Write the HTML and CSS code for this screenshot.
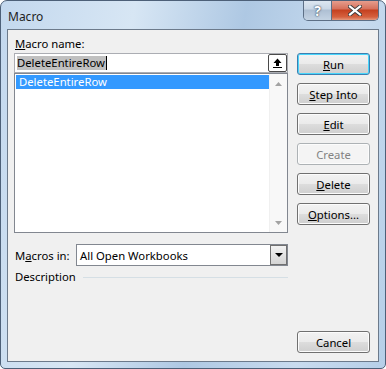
FILE: index.html
```html
<!DOCTYPE html>
<html lang="en">
<head>
    <meta charset="UTF-8">
    <title>Macro</title>
    <link rel="stylesheet" href="styles.css">
</head>
<body>
    <div class="window">
        <!-- Title bar -->
        <div class="title-bar">
            <span class="title">Macro</span>
            <div class="caption-buttons">
                <div class="cap-btn help">?</div>
                <div class="cap-btn close">
                    <svg width="14" height="11" viewBox="0 0 14 11">
                        <path d="M2 1.5 L12 9.5 M12 1.5 L2 9.5" stroke="#3d3d3d" stroke-width="4" stroke-linecap="square"/>
                        <path d="M2 1.5 L12 9.5 M12 1.5 L2 9.5" stroke="#ffffff" stroke-width="2.2" stroke-linecap="square"/>
                    </svg>
                </div>
            </div>
        </div>

        <!-- Client area -->
        <div class="client">
            <div class="left-col">
                <div class="label"><u>M</u>acro name:</div>
                <div class="name-box">
                    <span class="sel-text">DeleteEntireRow</span><span class="caret"></span>
                    <div class="up-btn">
                        <svg width="9" height="10" viewBox="0 0 9 10">
                            <path d="M4.5 0.5 L8.5 5 L6 5 L6 8 L3 8 L3 5 L0.5 5 Z" fill="#000"/>
                            <rect x="0" y="9" width="9" height="1" fill="#000"/>
                        </svg>
                    </div>
                </div>
                <div class="list-box">
                    <div class="list-items">
                        <div class="item selected">DeleteEntireRow</div>
                    </div>
                    <div class="scrollbar">
                        <svg width="7" height="4" viewBox="0 0 7 4"><path d="M0 4 L3.5 0 L7 4 Z" fill="#a3a3a3"/></svg>
                        <svg width="7" height="4" viewBox="0 0 7 4"><path d="M0 0 L3.5 4 L7 0 Z" fill="#a3a3a3"/></svg>
                    </div>
                </div>
                <div class="macros-in">
                    <span class="label">M<u>a</u>cros in:</span>
                    <div class="combo">
                        <span class="combo-text">All Open Workbooks</span>
                        <div class="combo-btn">
                            <svg width="8" height="4" viewBox="0 0 8 4"><path d="M0 0 L8 0 L4 4 Z" fill="#000"/></svg>
                        </div>
                    </div>
                </div>
                <div class="description">
                    <span class="label">Description</span>
                    <div class="rule"></div>
                </div>
            </div>

            <div class="right-col">
                <div class="btn default"><u>R</u>un</div>
                <div class="btn"><u>S</u>tep Into</div>
                <div class="btn"><u>E</u>dit</div>
                <div class="btn disabled">Create</div>
                <div class="btn"><u>D</u>elete</div>
                <div class="btn"><u>O</u>ptions...</div>
                <div class="btn cancel">Cancel</div>
            </div>
        </div>
    </div>
</body>
</html>
```

FILE: styles.css
```css
body {
    margin: 0;
    background-color: #ffffff;
    font-family: "Segoe UI", "Noto Sans", sans-serif;
    font-size: 11.3px;
    color: #000;
}
.window {
    width: 386px;
    height: 369px;
    box-sizing: border-box;
    border: 1px solid #4d6078;
    border-radius: 7px 7px 5px 5px;
    background: linear-gradient(100deg, #c3d8ee 0%, #d7e6f4 30%, #aec8e3 55%, #c8dbef 80%, #b6cfe8 100%);
    display: flex;
    flex-direction: column;
    overflow: hidden;
}

/* Title bar */
.title-bar {
    height: 28px;
    display: flex;
    align-items: flex-start;
    padding-left: 7px;
    flex-shrink: 0;
}
.title {
    margin-top: 7px;
    font-size: 12px;
    color: #1e1e1e;
}
.caption-buttons {
    margin-left: auto;
    margin-right: 6px;
    margin-top: -1px;
    display: flex;
    border: 1px solid #5d6f86;
    border-top: none;
    border-radius: 0 0 5px 5px;
    overflow: hidden;
    height: 20px;
}
.cap-btn {
    display: flex;
    justify-content: center;
    align-items: center;
}
.help {
    width: 27px;
    background: linear-gradient(#dfe8f2 0%, #c9d7e6 45%, #aebfd3 50%, #c4d3e3 100%);
    border-right: 1px solid #5d6f86;
    color: #fff;
    font-weight: bold;
    font-size: 14px;
    text-shadow: 0 0 2px #33475e, 0 0 1px #33475e;
}
.close {
    width: 46px;
    background: linear-gradient(#e8a393 0%, #d6705b 45%, #c4401f 50%, #d6613f 85%, #e49a7f 100%);
}

/* Client area */
.client {
    flex: 1;
    margin: 0 6px 6px 6px;
    border: 1px solid #6c7a8b;
    background-color: #f0f0f0;
    display: flex;
    padding: 0 7px 0 6px;
    gap: 9px;
}
.left-col {
    width: 274px;
    display: flex;
    flex-direction: column;
}
.label {
    color: #000;
}
.left-col > .label {
    margin: 6px 0 0 1px;
    height: 17px;
}
.name-box {
    height: 20px;
    box-sizing: border-box;
    border: 1px solid #abadb3;
    background-color: #fff;
    display: flex;
    align-items: center;
    padding-left: 2px;
}
.sel-text {
    background-color: #c0c0c0;
    line-height: 14px;
    padding-right: 1px;
}
.caret {
    width: 1px;
    height: 14px;
    background-color: #000;
}
.up-btn {
    margin-left: auto;
    margin-right: 0;
    width: 19px;
    height: 18px;
    box-sizing: border-box;
    border: 1px solid #4a4a4a;
    border-radius: 2px;
    background-color: #fff;
    display: flex;
    justify-content: center;
    align-items: center;
}
.list-box {
    height: 160px;
    box-sizing: border-box;
    border: 1px solid #828790;
    background-color: #fff;
    display: flex;
}
.list-items {
    flex: 1;
    padding: 1px 0 0 1px;
}
.item {
    height: 14px;
    line-height: 13px;
    padding-left: 3px;
}
.item.selected {
    background-color: #3399ff;
    color: #fff;
}
.scrollbar {
    width: 17px;
    background-color: #f8f8f8;
    border-left: 1px solid #f0f0f0;
    display: flex;
    flex-direction: column;
    justify-content: space-between;
    align-items: center;
    padding: 8px 0 7px;
}
.macros-in {
    margin-top: 11px;
    display: flex;
    align-items: center;
}
.macros-in .label {
    width: 61px;
    padding-left: 1px;
}
.combo {
    flex: 1;
    height: 22px;
    box-sizing: border-box;
    border: 1px solid #828790;
    background-color: #fff;
    display: flex;
    align-items: center;
    padding-left: 3px;
}
.combo-btn {
    margin-left: auto;
    width: 17px;
    height: 20px;
    box-sizing: border-box;
    border: 1px solid #707070;
    background: linear-gradient(#f2f2f2, #d4d4d4);
    display: flex;
    justify-content: center;
    align-items: center;
}
.description {
    margin-top: 2px;
    display: flex;
    align-items: center;
    height: 17px;
}
.description .label {
    padding-left: 1px;
}
.rule {
    flex: 1;
    height: 1px;
    margin-left: 7px;
    margin-top: 1px;
    background-color: #d5dfe5;
}

/* Buttons */
.right-col {
    width: 73px;
    display: flex;
    flex-direction: column;
    padding-top: 23px;
    gap: 8px;
}
.btn {
    height: 22px;
    box-sizing: border-box;
    border: 1px solid #707070;
    border-radius: 3px;
    background: linear-gradient(#f2f2f2 0%, #ebebeb 49%, #dddddd 50%, #cfcfcf 100%);
    display: flex;
    justify-content: center;
    align-items: center;
    box-shadow: inset 0 0 0 1px #fcfcfc;
}
.btn.default {
    border-color: #3c7fb1;
    box-shadow: inset 0 0 0 1px #48d5fb;
}
.btn.disabled {
    color: #838383;
    border-color: #adb2b5;
    background: #f4f4f4;
}
.btn.cancel {
    margin-top: auto;
    margin-bottom: 8px;
}
```
